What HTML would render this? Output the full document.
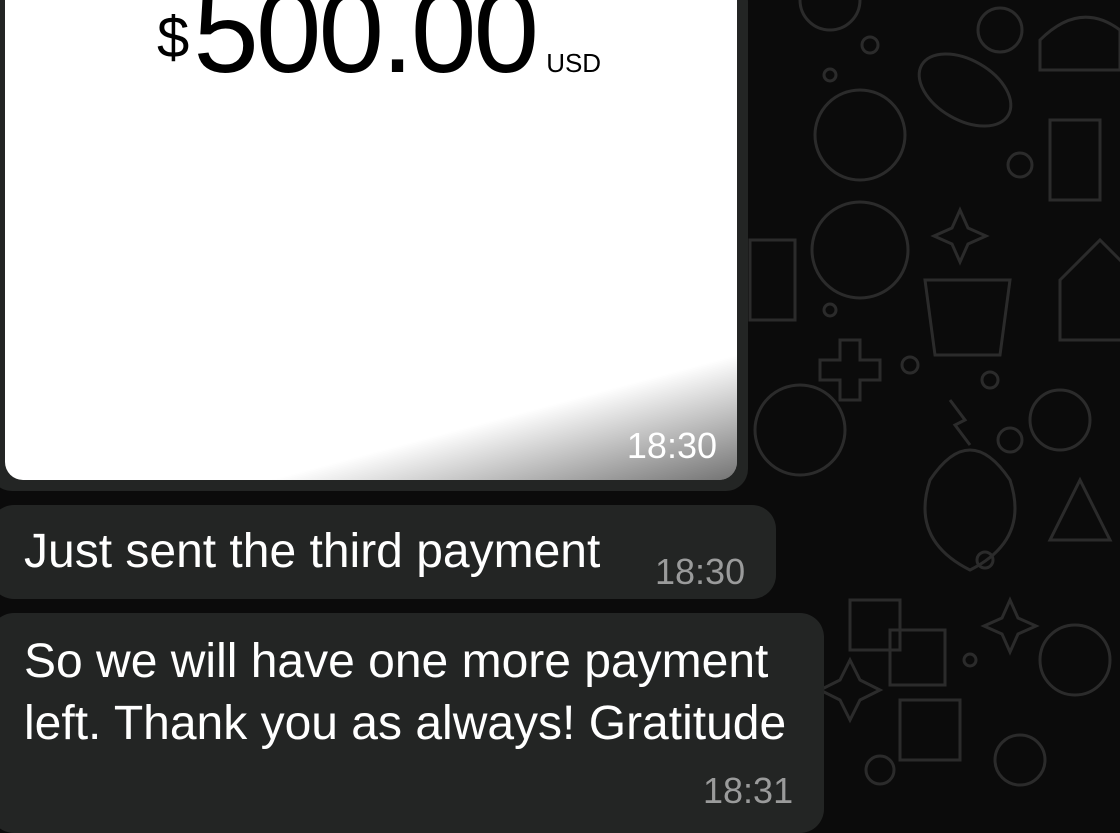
<!DOCTYPE html>
<html><head><meta charset="utf-8"><style>
html,body{margin:0;padding:0;width:1120px;height:800px;overflow:hidden;background:#0b0b0b;font-family:"Liberation Sans",sans-serif;}
.bg{position:absolute;left:0;top:0}
.imgb{position:absolute;left:-10px;top:-20px;width:758px;height:511px;background:#232524;border-radius:22px;}
.white{position:absolute;left:5px;top:-20px;width:732px;height:500px;background:#fff;border-radius:18px;overflow:hidden;}
.shade{position:absolute;left:0;top:0;width:100%;height:100%;background:linear-gradient(165deg,rgba(0,0,0,0) 82%,rgba(0,0,0,0.55) 100%);}
.amt{position:absolute;top:-16px;left:152px;color:#000;white-space:nowrap;}
.amt .d{font-size:58px;vertical-align:top;position:relative;top:40px;margin-right:4px}
.amt .n{font-size:118px;letter-spacing:-3px}
.amt .u{font-size:26px;margin-left:10px}
.t1{position:absolute;right:20px;top:445px;color:#fff;font-size:36px}
.b{position:absolute;left:-10px;background:#232524;border-radius:24px;color:#fff;}
.msg{font-size:48px;position:absolute;left:34px;white-space:nowrap;}
.tm{position:absolute;color:#9a9b9b;font-size:36px}
</style></head><body>
<svg class="bg" width="1120" height="800" fill="none" stroke="#2b2b2b" stroke-width="3">
<circle cx="830" cy="0" r="30"/><circle cx="1000" cy="30" r="22"/><circle cx="870" cy="45" r="8"/><circle cx="830" cy="75" r="6"/>
<ellipse cx="965" cy="90" rx="50" ry="30" transform="rotate(30 965 90)"/><path d="M1040 40 q40-40 80-10 v40 h-80z"/>
<circle cx="860" cy="135" r="45"/><path d="M1050 120 h50 v80 h-50z"/><circle cx="1020" cy="165" r="12"/>
<circle cx="860" cy="250" r="48"/><path d="M960 210 l8 18 18 8-18 8-8 18-8-18-18-8 18-8z"/><path d="M750 240 h45 v80 h-45z"/>
<path d="M925 280 h85 l-10 75 h-65z"/><path d="M1060 280 l40-40 30 30 v70 h-70z"/><circle cx="830" cy="310" r="6"/>
<path d="M840 340 h20 v20 h20 v20 h-20 v20 h-20 v-20 h-20 v-20 h20z"/><circle cx="910" cy="365" r="8"/><circle cx="990" cy="380" r="8"/>
<circle cx="800" cy="430" r="45"/><path d="M950 400 l15 20-10 5 15 20"/><circle cx="1010" cy="440" r="12"/><circle cx="1060" cy="420" r="30"/>
<path d="M930 480 q40-60 80 0 q20 60-40 90 q-60-30-40-90z"/><path d="M1080 480 l30 60 h-60z"/><circle cx="985" cy="560" r="8"/>
<path d="M850 600 h50 v50 h-50z"/><path d="M890 630 h55 v55 h-55z"/><circle cx="1075" cy="660" r="35"/><path d="M1010 600 l8 18 18 8-18 8-8 18-8-18-18-8 18-8z"/>
<path d="M850 660 l10 20 20 10-20 10-10 20-10-20-20-10 20-10z"/><path d="M900 700 h60 v60 h-60z"/><circle cx="1020" cy="760" r="25"/><circle cx="880" cy="770" r="14"/><circle cx="970" cy="660" r="6"/>
</svg>
<div class="imgb"></div>
<div class="white"><div class="shade"></div>
<div class="amt"><span class="d">$</span><span class="n">500.00</span><span class="u">USD</span></div>
<div class="t1">18:30</div>
</div>
<div class="b" style="top:505px;width:786px;height:94px;">
<div class="msg" style="top:19px">Just sent the third payment</div>
<div class="tm" style="left:665px;top:46px">18:30</div>
</div>
<div class="b" style="top:613px;width:834px;height:220px;">
<div class="msg" style="top:18px;line-height:62px">So we will have one more payment<br>left. Thank you as always! Gratitude</div>
<div class="tm" style="left:713px;top:157px">18:31</div>
</div>
</body></html>
